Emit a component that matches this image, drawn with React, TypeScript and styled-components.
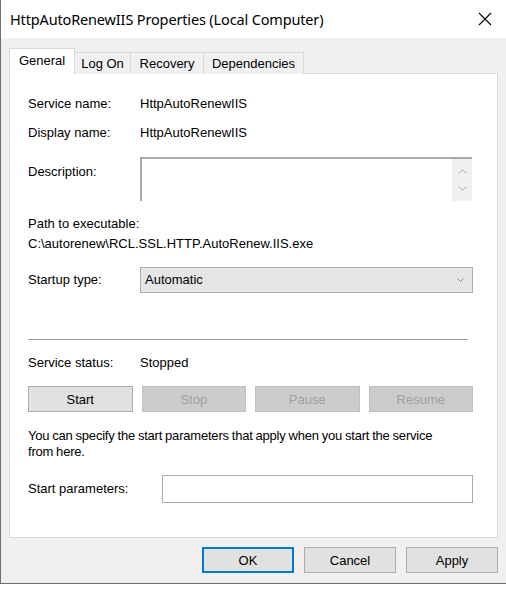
import styled, { createGlobalStyle } from "styled-components";

const GlobalStyle = createGlobalStyle`
  html, body {
    margin: 0;
    padding: 0;
    background: #ffffff;
  }
  body {
    font-family: "Liberation Sans", Arial, sans-serif;
    font-size: 13px;
    color: #000;
  }
`;

const tabs = [
  { label: "General", width: 66 },
  { label: "Log On", width: 57 },
  { label: "Recovery", width: 74 },
  { label: "Dependencies", width: 101 },
];
const actions = [
  { label: "Start", disabled: false },
  { label: "Stop", disabled: true },
  { label: "Pause", disabled: true },
  { label: "Resume", disabled: true },
];

export default function App() {
  return (
    <>
      <GlobalStyle />
      <Window>
        <TitleBar>
          <Title>HttpAutoRenewIIS Properties (Local Computer)</Title>
          <CloseIcon viewBox="0 0 14 14" aria-hidden>
            <path d="M1 1 L13 13 M13 1 L1 13" stroke="#000" strokeWidth="1.1" />
          </CloseIcon>
        </TitleBar>
        <Body>
          <TabRow>
            {tabs.map((t, i) => (
              <Tab key={t.label} $active={i === 0} $width={t.width}>
                {t.label}
              </Tab>
            ))}
          </TabRow>
          <Panel>
            <Row $top={22}>
              <Label>Service name:</Label>
              <Value>HttpAutoRenewIIS</Value>
            </Row>
            <Row $top={13}>
              <Label>Display name:</Label>
              <Value>HttpAutoRenewIIS</Value>
            </Row>
            <Row $top={16} $align="flex-start">
              <DescLabel>Description:</DescLabel>
              <DescBox>
                <DescScroll>
                  <Chevron viewBox="0 0 9 5" aria-hidden>
                    <path d="M0.5 4.5 L4.5 0.8 L8.5 4.5" />
                  </Chevron>
                  <Chevron viewBox="0 0 9 5" aria-hidden>
                    <path d="M0.5 0.5 L4.5 4.2 L8.5 0.5" />
                  </Chevron>
                </DescScroll>
              </DescBox>
            </Row>
            <Line $top={15}>Path to executable:</Line>
            <Line $top={4}>C:\autorenew\RCL.SSL.HTTP.AutoRenew.IIS.exe</Line>
            <Row $top={15}>
              <Label>Startup type:</Label>
              <Combo>
                <span>Automatic</span>
                <ComboArrow viewBox="0 0 7 4" aria-hidden>
                  <path d="M0.5 0.5 L3.5 3.5 L6.5 0.5" />
                </ComboArrow>
              </Combo>
            </Row>
            <Separator />
            <Row $top={15}>
              <Label>Service status:</Label>
              <Value>Stopped</Value>
            </Row>
            <ActionGrid>
              {actions.map((a) => (
                <ActionButton key={a.label} $disabled={a.disabled}>
                  {a.label}
                </ActionButton>
              ))}
            </ActionGrid>
            <Note>
              You can specify the start parameters that apply when you start the service
              from here.
            </Note>
            <Row $top={15}>
              <ParamLabel>Start parameters:</ParamLabel>
              <ParamInput />
            </Row>
          </Panel>
          <Footer>
            <DialogButton $default>OK</DialogButton>
            <DialogButton>Cancel</DialogButton>
            <DialogButton>Apply</DialogButton>
          </Footer>
        </Body>
      </Window>
    </>
  );
}

const Window = styled.div`
  width: 506px;
  height: 584px;
  box-sizing: border-box;
  border-left: 1px solid #6f6f6f;
  border-bottom: 1px solid #6f6f6f;
  display: flex;
  flex-direction: column;
  background: #f0f0f0;
`;

const TitleBar = styled.div`
  height: 38px;
  background: #ffffff;
  display: flex;
  align-items: center;
  justify-content: space-between;
  padding: 0 14px 0 9px;
`;

const Title = styled.div`
  font-family: "Noto Sans", "Open Sans", sans-serif;
  font-size: 14.5px;
  color: #000;
  letter-spacing: -0.15px;
`;

const CloseIcon = styled.svg`
  width: 14px;
  height: 14px;
  fill: none;
`;

const Body = styled.div`
  flex: 1;
  display: flex;
  flex-direction: column;
  padding: 10px 8px 0 8px;
`;

const TabRow = styled.div`
  display: flex;
  align-items: flex-end;
  margin-bottom: -1px;
  position: relative;
  z-index: 1;
`;

const Tab = styled.div<{ $active?: boolean; $width: number }>`
  box-sizing: border-box;
  width: ${(p) => p.$width}px;
  height: ${(p) => (p.$active ? "26px" : "22px")};
  padding-top: ${(p) => (p.$active ? "4px" : "3px")};
  text-align: center;
  background: ${(p) => (p.$active ? "#ffffff" : "#f0f0f0")};
  border: 1px solid #d9d9d9;
  border-bottom: ${(p) => (p.$active ? "1px solid #ffffff" : "none")};
  margin-left: ${(p) => (p.$active ? "0" : "-1px")};
  line-height: 16px;
  white-space: nowrap;
`;

const Panel = styled.div`
  width: 489px;
  height: 465px;
  box-sizing: border-box;
  background: #ffffff;
  border: 1px solid #d9d9d9;
  padding: 0 23px 0 18px;
  display: flex;
  flex-direction: column;
`;

const Row = styled.div<{ $top: number; $align?: string }>`
  display: flex;
  align-items: ${(p) => p.$align ?? "center"};
  margin-top: ${(p) => p.$top}px;
  line-height: 16px;
`;

const Label = styled.div`
  width: 112px;
  flex: none;
`;

const DescLabel = styled(Label)`
  padding-top: 7px;
`;

const ParamLabel = styled(Label)`
  width: 134px;
`;

const Value = styled.div``;

const DescBox = styled.div`
  width: 332px;
  height: 44px;
  box-sizing: border-box;
  border-top: 2px solid #a9a9a9;
  border-left: 2px solid #a9a9a9;
  display: flex;
  justify-content: flex-end;
`;

const DescScroll = styled.div`
  width: 20px;
  background: #f0f0f0;
  display: flex;
  flex-direction: column;
  align-items: center;
  justify-content: space-around;
  padding: 4px 0;
`;

const Chevron = styled.svg`
  width: 9px;
  height: 5px;
  fill: none;
  stroke: #a6a6a6;
  stroke-width: 1;
`;

const Line = styled.div<{ $top: number }>`
  margin-top: ${(p) => p.$top}px;
  line-height: 16px;
`;

const Combo = styled.div`
  width: 333px;
  height: 26px;
  box-sizing: border-box;
  background: #e5e5e5;
  border: 1px solid #adadad;
  display: flex;
  align-items: center;
  justify-content: space-between;
  padding: 0 8px 0 4px;
`;

const ComboArrow = styled.svg`
  width: 7px;
  height: 4px;
  fill: none;
  stroke: #8a8a8a;
  stroke-width: 1;
`;

const Separator = styled.div`
  height: 1px;
  width: 440px;
  background: #a0a0a0;
  margin-top: 46px;
`;

const ActionGrid = styled.div`
  display: grid;
  grid-template-columns: repeat(4, 1fr);
  gap: 9px;
  width: 445px;
  margin-top: 15px;
`;

const ActionButton = styled.div<{ $disabled?: boolean }>`
  height: 26px;
  box-sizing: border-box;
  display: flex;
  align-items: center;
  justify-content: center;
  background: ${(p) => (p.$disabled ? "#cccccc" : "#e1e1e1")};
  border: 1px solid ${(p) => (p.$disabled ? "#bfbfbf" : "#adadad")};
  color: ${(p) => (p.$disabled ? "#a0a0a0" : "#000")};
`;

const Note = styled.div`
  margin-top: 16px;
  line-height: 16px;
  width: 420px;
  letter-spacing: -0.2px;
  word-spacing: -0.5px;
`;

const ParamInput = styled.div`
  width: 311px;
  height: 28px;
  box-sizing: border-box;
  border: 1px solid #ababab;
  background: #fff;
`;

const Footer = styled.div`
  display: flex;
  justify-content: flex-end;
  gap: 10px;
  margin-top: 9px;
`;

const DialogButton = styled.div<{ $default?: boolean }>`
  width: 92px;
  height: 26px;
  box-sizing: border-box;
  display: flex;
  align-items: center;
  justify-content: center;
  background: #e1e1e1;
  border: ${(p) => (p.$default ? "2px solid #0078d7" : "1px solid #adadad")};
`;
